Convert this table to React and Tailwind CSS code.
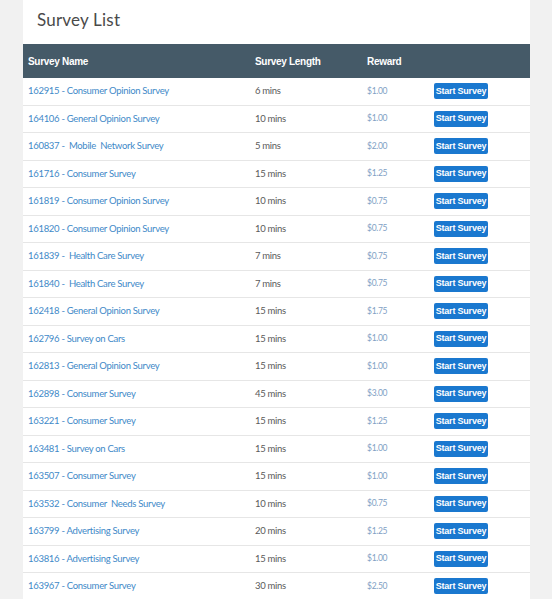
import React from 'react';

const surveys = [
  { id: '162915', name: 'Consumer Opinion Survey', length: '6 mins', reward: '$1.00' },
  { id: '164106', name: 'General Opinion Survey', length: '10 mins', reward: '$1.00' },
  { id: '160837', name: ' Mobile  Network Survey', length: '5 mins', reward: '$2.00' },
  { id: '161716', name: 'Consumer Survey', length: '15 mins', reward: '$1.25' },
  { id: '161819', name: 'Consumer Opinion Survey', length: '10 mins', reward: '$0.75' },
  { id: '161820', name: 'Consumer Opinion Survey', length: '10 mins', reward: '$0.75' },
  { id: '161839', name: ' Health Care Survey', length: '7 mins', reward: '$0.75' },
  { id: '161840', name: ' Health Care Survey', length: '7 mins', reward: '$0.75' },
  { id: '162418', name: 'General Opinion Survey', length: '15 mins', reward: '$1.75' },
  { id: '162796', name: 'Survey on Cars', length: '15 mins', reward: '$1.00' },
  { id: '162813', name: 'General Opinion Survey', length: '15 mins', reward: '$1.00' },
  { id: '162898', name: 'Consumer Survey', length: '45 mins', reward: '$3.00' },
  { id: '163221', name: 'Consumer Survey', length: '15 mins', reward: '$1.25' },
  { id: '163481', name: 'Survey on Cars', length: '15 mins', reward: '$1.00' },
  { id: '163507', name: 'Consumer Survey', length: '15 mins', reward: '$1.00' },
  { id: '163532', name: 'Consumer  Needs Survey', length: '10 mins', reward: '$0.75' },
  { id: '163799', name: 'Advertising Survey', length: '20 mins', reward: '$1.25' },
  { id: '163816', name: 'Advertising Survey', length: '15 mins', reward: '$1.00' },
  { id: '163967', name: 'Consumer Survey', length: '30 mins', reward: '$2.50' },
];

const cols = 'grid grid-cols-[227px_112px_67px_1fr] items-center pl-[5px]';

export default function App() {
  return (
    <div className="h-[599px] w-[552px] overflow-hidden bg-[#f1f1f1] font-['Lato',sans-serif]">
      <div className="ml-[23px] h-full w-[507px] bg-white">
        <h1 className="h-[44px] pl-[14px] pt-[8px] text-[17px] leading-[24px] font-normal text-[#4a4a4a] tracking-[0.2px]">
          Survey List
        </h1>
        <div className={`${cols} h-[34px] bg-[#455a68] text-[10px] font-bold text-white tracking-[-0.3px] font-['Liberation_Sans',sans-serif]`}>
          <span>Survey Name</span>
          <span>Survey Length</span>
          <span>Reward</span>
          <span />
        </div>
        {surveys.map((s) => (
          <div key={s.id} className={`${cols} h-[27.5px] border-b border-[#e6e6e6] text-[9.5px] tracking-[-0.3px]`}>
            <span className="text-[#4189c8] whitespace-pre">{s.id} - {s.name}</span>
            <span className="text-[#5a5a5a]">{s.length}</span>
            <span className="text-[8.5px] text-[#7f9fc4]">{s.reward}</span>
            <span>
              <button className="h-[16px] w-[54px] rounded-[2px] bg-[#1a78cf] text-[9px] font-bold text-white leading-none tracking-[-0.2px] font-['Liberation_Sans',sans-serif]">
                Start Survey
              </button>
            </span>
          </div>
        ))}
      </div>
    </div>
  );
}
